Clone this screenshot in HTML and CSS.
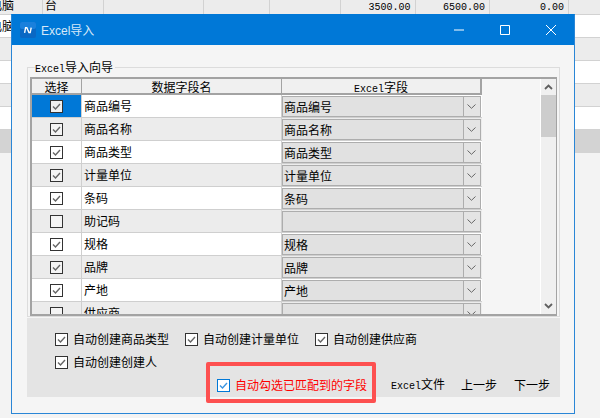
FILE: index.html
```html
<!DOCTYPE html>
<html lang="zh">
<head>
<meta charset="utf-8">
<title>Excel导入</title>
<link rel="stylesheet" href="styles.css">
</head>
<body>
<div class="backdrop">
  <div class="bg-row bg-top">
    <div class="bc c1"><span class="clip">电脑</span></div><div class="bc c2">台</div><div class="bc c3"></div><div class="bc c4"></div><div class="bc c5"></div><div class="bc c6 num">3500.00</div><div class="bc c7 num">6500.00</div><div class="bc c8 num">0.00</div><div class="bc c9"></div>
  </div>
  <div class="bg-row bg-white"><div class="bc c1"><span class="clip">电脑</span></div></div>
  <div class="bg-row bg-gray"></div>
  <div class="bg-row bg-white"></div>
  <div class="bg-row bg-gray"></div>
  <div class="bg-row bg-white"></div>
  <div class="bg-row bg-sel"></div>
</div>

<section class="window">
  <header class="titlebar">
    <svg class="app-icon" viewBox="0 0 16 16"><rect width="16" height="16" rx="2" fill="#0a68c4"/><rect width="16" height="7" rx="2" fill="#1a80dc"/><path d="M4.6 10.8 5.6 5.6h1.2l2.2 5h1.2l1-5" fill="none" stroke="#fff" stroke-width="1.4"/></svg>
    <h1 class="title"><span class="title-latin">Excel</span>导入</h1>
    <div class="win-btn"><svg viewBox="0 0 10 10"><path d="M0 5h10"/></svg></div>
    <div class="win-btn"><svg viewBox="0 0 10 10"><path d="M.5.5h9v9h-9z"/></svg></div>
    <div class="win-btn"><svg viewBox="0 0 10 10"><path d="M0 0l10 10M10 0 0 10"/></svg></div>
  </header>

  <div class="content">
    <div class="group">
      <div class="legend"><span class="mono">Excel</span>导入向导</div>
      <div class="gridbox">
        <div class="table">
          <div class="thead">
            <div class="th col-a">选择</div>
            <div class="th col-b">数据字段名</div>
            <div class="th col-c"><span class="mono">Excel</span>字段</div>
          </div>
          <div class="tr odd">
            <div class="td col-a active"><span class="cb"><svg viewBox="0 0 11 11"><path d="M2 5.5 4.5 8 9 3"/></svg></span></div>
            <div class="td col-b">商品编号</div>
            <div class="td col-c"><div class="combo"><span class="combo-text">商品编号</span><span class="combo-btn"><svg viewBox="0 0 9 5"><path d="M.5.5 4.5 4.3 8.5.5"/></svg></span></div></div>
          </div>
          <div class="tr even">
            <div class="td col-a"><span class="cb"><svg viewBox="0 0 11 11"><path d="M2 5.5 4.5 8 9 3"/></svg></span></div>
            <div class="td col-b">商品名称</div>
            <div class="td col-c"><div class="combo"><span class="combo-text">商品名称</span><span class="combo-btn"><svg viewBox="0 0 9 5"><path d="M.5.5 4.5 4.3 8.5.5"/></svg></span></div></div>
          </div>
          <div class="tr odd">
            <div class="td col-a"><span class="cb"><svg viewBox="0 0 11 11"><path d="M2 5.5 4.5 8 9 3"/></svg></span></div>
            <div class="td col-b">商品类型</div>
            <div class="td col-c"><div class="combo"><span class="combo-text">商品类型</span><span class="combo-btn"><svg viewBox="0 0 9 5"><path d="M.5.5 4.5 4.3 8.5.5"/></svg></span></div></div>
          </div>
          <div class="tr even">
            <div class="td col-a"><span class="cb"><svg viewBox="0 0 11 11"><path d="M2 5.5 4.5 8 9 3"/></svg></span></div>
            <div class="td col-b">计量单位</div>
            <div class="td col-c"><div class="combo"><span class="combo-text">计量单位</span><span class="combo-btn"><svg viewBox="0 0 9 5"><path d="M.5.5 4.5 4.3 8.5.5"/></svg></span></div></div>
          </div>
          <div class="tr odd">
            <div class="td col-a"><span class="cb"><svg viewBox="0 0 11 11"><path d="M2 5.5 4.5 8 9 3"/></svg></span></div>
            <div class="td col-b">条码</div>
            <div class="td col-c"><div class="combo"><span class="combo-text">条码</span><span class="combo-btn"><svg viewBox="0 0 9 5"><path d="M.5.5 4.5 4.3 8.5.5"/></svg></span></div></div>
          </div>
          <div class="tr even">
            <div class="td col-a"><span class="cb"></span></div>
            <div class="td col-b">助记码</div>
            <div class="td col-c"><div class="combo"><span class="combo-text"></span><span class="combo-btn"><svg viewBox="0 0 9 5"><path d="M.5.5 4.5 4.3 8.5.5"/></svg></span></div></div>
          </div>
          <div class="tr odd">
            <div class="td col-a"><span class="cb"><svg viewBox="0 0 11 11"><path d="M2 5.5 4.5 8 9 3"/></svg></span></div>
            <div class="td col-b">规格</div>
            <div class="td col-c"><div class="combo"><span class="combo-text">规格</span><span class="combo-btn"><svg viewBox="0 0 9 5"><path d="M.5.5 4.5 4.3 8.5.5"/></svg></span></div></div>
          </div>
          <div class="tr even">
            <div class="td col-a"><span class="cb"><svg viewBox="0 0 11 11"><path d="M2 5.5 4.5 8 9 3"/></svg></span></div>
            <div class="td col-b">品牌</div>
            <div class="td col-c"><div class="combo"><span class="combo-text">品牌</span><span class="combo-btn"><svg viewBox="0 0 9 5"><path d="M.5.5 4.5 4.3 8.5.5"/></svg></span></div></div>
          </div>
          <div class="tr odd">
            <div class="td col-a"><span class="cb"><svg viewBox="0 0 11 11"><path d="M2 5.5 4.5 8 9 3"/></svg></span></div>
            <div class="td col-b">产地</div>
            <div class="td col-c"><div class="combo"><span class="combo-text">产地</span><span class="combo-btn"><svg viewBox="0 0 9 5"><path d="M.5.5 4.5 4.3 8.5.5"/></svg></span></div></div>
          </div>
          <div class="tr even">
            <div class="td col-a"><span class="cb"></span></div>
            <div class="td col-b">供应商</div>
            <div class="td col-c"><div class="combo"><span class="combo-text"></span><span class="combo-btn"><svg viewBox="0 0 9 5"><path d="M.5.5 4.5 4.3 8.5.5"/></svg></span></div></div>
          </div>
        </div>
        <div class="filler"></div>
        <div class="scrollbar">
          <div class="sb-btn"><svg viewBox="0 0 9 6"><path d="M1 5 4.5 1.5 8 5"/></svg></div>
          <div class="sb-thumb"></div>
          <div class="sb-track"></div>
          <div class="sb-btn"><svg viewBox="0 0 9 6"><path d="M1 1 4.5 4.5 8 1"/></svg></div>
        </div>
      </div>
    </div>

    <div class="panel">
      <div class="options">
        <label class="opt"><span class="cb"><svg viewBox="0 0 11 11"><path d="M2 5.5 4.5 8 9 3"/></svg></span>自动创建商品类型</label>
        <label class="opt"><span class="cb"><svg viewBox="0 0 11 11"><path d="M2 5.5 4.5 8 9 3"/></svg></span>自动创建计量单位</label>
        <label class="opt"><span class="cb"><svg viewBox="0 0 11 11"><path d="M2 5.5 4.5 8 9 3"/></svg></span>自动创建供应商</label>
        <label class="opt"><span class="cb"><svg viewBox="0 0 11 11"><path d="M2 5.5 4.5 8 9 3"/></svg></span>自动创建创建人</label>
      </div>
      <div class="actions">
        <label class="opt opt-auto"><span class="cb cb-focus"><svg viewBox="0 0 11 11"><path d="M2 5.5 4.5 8 9 3"/></svg></span>自动勾选已匹配到的字段<span class="mark"></span></label>
        <div class="act act-file"><span class="mono">Excel</span>文件</div>
        <div class="act act-prev">上一步</div>
        <div class="act">下一步</div>
      </div>
    </div>
  </div>
</section>
</body>
</html>
```
FILE: styles.css
```css
* { box-sizing: border-box; }
html, body { margin: 0; padding: 0; }
body {
  width: 600px;
  height: 418px;
  overflow: hidden;
  background: #f3f3f3;
  color: #000;
  font: 12px/14px "Noto Sans CJK SC", "Liberation Sans", sans-serif;
}
.mono { font-family: "Liberation Mono", monospace; font-size: 10px; }

/* application behind the dialog */
.bg-row { display: flex; height: 23px; border-bottom: 1px solid #d2d2d2; }
.bg-top { height: 15px; background: #ececec; }
.bg-white { background: #fff; }
.bg-gray { background: #ececec; }
.bg-sel { height: 23px; background: #d3d3d3; border: 0; }
.bc { height: 100%; border-right: 1px solid #d2d2d2; line-height: 14px; overflow: hidden; flex: none; }
.clip { display: block; margin-left: -10px; }
.bg-top .bc { margin-top: -2px; height: calc(100% + 2px); }
.bg-white .c1 { line-height: 22px; border: 0; }
.c1 { width: 43px; }
.c2 { width: 61px; padding-left: 2px; }
.c3 { width: 100px; }
.c4 { width: 66px; }
.c5 { width: 71px; }
.c6, .c7 { width: 74.5px; }
.c8 { width: 79px; }
.c9 { flex: 1; border: 0; }
.num { font: 10px/19px "Liberation Mono", monospace; text-align: right; padding-right: 4px; }

/* dialog */
.window {
  position: absolute;
  left: 11px;
  top: 14px;
  width: 564px;
  height: 400px;
  background: #f5f5f5;
  border: 1px solid #2a86d6;
  border-top-color: #0078d7;
}
.titlebar { display: flex; align-items: center; height: 30px; background: #0078d7; padding-left: 8px; color: #d6e8f8; }
.app-icon { width: 16px; height: 16px; flex: none; margin-right: 5px; }
.title { flex: 1; margin: 0; font-size: 12px; font-weight: 400; line-height: 16px; }
.title-latin { font-family: "Liberation Sans", sans-serif; font-size: 12px; }
.win-btn { width: 46px; height: 30px; display: flex; align-items: center; justify-content: center; }
.win-btn svg { width: 10px; height: 10px; fill: none; stroke: #fff; stroke-width: 1; overflow: visible; }

.content { padding: 22px 14px 0 15px; }
.group { position: relative; height: 250px; border: 1px solid #dcdcdc; padding: 9px 2px 0 2px; }
.legend { position: absolute; left: 7px; top: -8px; padding: 0 2px 0 0; background: #f5f5f5; line-height: 14px; }

.gridbox { display: flex; height: 239px; border: 2px solid #a3a3a3; border-right-width: 1px; background: #f5f5f5; overflow: hidden; }
.table { width: 450px; flex: none; height: 235px; overflow: hidden; }
.thead { display: flex; height: 16px; background: #f0f0f0; border-bottom: 2px solid #a3a3a3; border-right: 2px solid #a3a3a3; }
.th { text-align: center; line-height: 15px; border-right: 1px solid #a3a3a3; height: 14px; }
.th.col-c { border-right: 0; width: 198px; }
.tr { display: flex; height: 23px; border-bottom: 1px solid #cfcfcf; }
.odd { background: #fff; }
.even { background: #ececec; }
.col-a { width: 50px; flex: none; }
.col-b { width: 200px; flex: none; }
.col-c { width: 200px; flex: none; }
.td { display: flex; align-items: center; border-right: 1px solid #cfcfcf; }
.td.col-a { justify-content: center; }
.td.col-b { padding-left: 2px; line-height: 22px; }
.td.col-c { border-right: 0; padding: 1px 1px 0 0; align-items: flex-start; }
.active { background: #0078d7; }

.cb { width: 13px; height: 13px; flex: none; display: block; background: #fff; border: 1px solid #333; }
.td .cb { background: transparent; }
.even .cb { background: #f4f4f4; }
.active .cb { background: #f0f0f0; }
.cb svg { display: block; width: 11px; height: 11px; fill: none; stroke: #666; stroke-width: 1.4; }
.combo { display: flex; width: 199px; height: 21px; background: #e1e1e1; border: 1px solid #adadad; }
.combo-text { flex: 1; padding-left: 1px; line-height: 19px; }
.combo-btn { width: 17px; flex: none; display: flex; align-items: center; justify-content: center; background: #e4e4e4; border-left: 1px solid #adadad; }
.combo-btn svg { width: 9px; height: 5px; fill: none; stroke: #666; stroke-width: 1; margin-right: 1px; }

.filler { flex: 1; }
.scrollbar { width: 16px; flex: none; display: flex; flex-direction: column; background: #f0f0f0; height: 235px; border-left: 1px solid #fff; }
.sb-btn { height: 16px; flex: none; display: flex; align-items: center; justify-content: center; }
.sb-btn svg { width: 9px; height: 6px; fill: none; stroke: #606060; stroke-width: 1.8; }
.sb-thumb { height: 42px; flex: none; background: #cdcdcd; }
.sb-track { flex: 1; }

.panel { height: 79px; margin-top: 1px; background: #e4e4e4; padding: 14px 0 0 28px; }
.options { display: flex; flex-wrap: wrap; column-gap: 18px; row-gap: 9px; width: 400px; }
.opt { display: flex; align-items: center; gap: 5px; height: 14px; white-space: nowrap; }
.options .opt { width: 112px; }
.options .opt:nth-child(4) { width: 200px; }
.actions { display: flex; align-items: center; height: 14px; margin: 9px 0 0 162px; }
.opt-auto { position: relative; color: #f00; }
.cb-focus { border-color: #0078d7; }
.cb-focus svg { stroke: #3d95e0; }
.mark { position: absolute; left: -11px; top: -16px; width: 170px; height: 41px; border: 4px solid #fd5050; border-radius: 2px; }
.act { margin-left: 17px; }
.act-file { margin-left: 24px; margin-right: -1px; }
```
